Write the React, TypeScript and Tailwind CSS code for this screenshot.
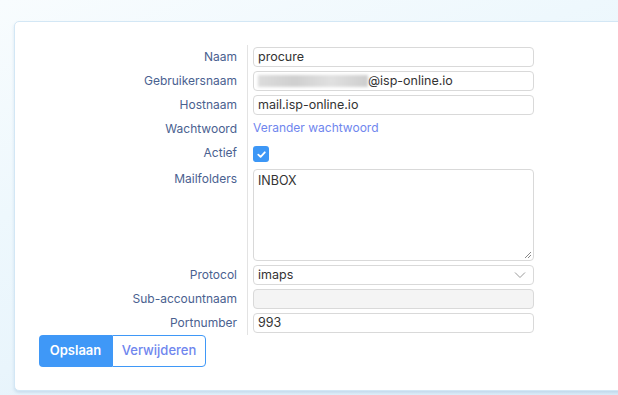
import React from 'react'

const font = { fontFamily: 'Inter, "Noto Sans", sans-serif' }

function Label({ children, className = '' }: { children: React.ReactNode; className?: string }) {
  return (
    <div className={`text-right pr-[10px] text-[12px] leading-[20px] text-[#4a6190] ${className}`}>
      {children}
    </div>
  )
}

const inputBase =
  'w-[281px] h-[20px] rounded-[4px] border border-[#d9d9d9] px-[4px] text-[12.5px] leading-[18px] text-[#333] flex items-center'
const inputCls = `${inputBase} bg-white`

export default function App() {
  return (
    <div
      className="w-[618px] h-[395px] overflow-hidden bg-[linear-gradient(160deg,#f8fcfe_0%,#eef8fd_35%,#e9f5fc_60%,#dbecf8_100%)] pt-[21px] pl-[14px]"
      style={font}
    >
      <div className="w-[640px] h-[370px] rounded-[5px] border border-[#d3e7f5] bg-white shadow-[0_2px_3px_rgba(120,160,200,0.25)] pl-[24px] pt-[23px]">
        <div className="grid grid-cols-[208px_1fr]">
          {/* Naam */}
          <Label className="h-[24px] pt-[2px]">Naam</Label>
          <div className="border-l border-[#e3e3e3] pl-[5px] h-[24px] pt-[2px]">
            <div className={inputCls}>procure</div>
          </div>

          {/* Gebruikersnaam */}
          <Label className="h-[24px] pt-[2px]">Gebruikersnaam</Label>
          <div className="border-l border-[#e3e3e3] pl-[5px] h-[24px] pt-[2px]">
            <div className={inputCls}>
              <span className="inline-block w-[110px] h-[12px] bg-[linear-gradient(90deg,#dcdcdc,#cfcfcf,#e0e0e0,#cdcdcd)] blur-[1.5px]" />
              <span>@isp-online.io</span>
            </div>
          </div>

          {/* Hostnaam */}
          <Label className="h-[24px] pt-[2px]">Hostnaam</Label>
          <div className="border-l border-[#e3e3e3] pl-[5px] h-[24px] pt-[2px]">
            <div className={inputCls}>mail.isp-online.io</div>
          </div>

          {/* Wachtwoord */}
          <Label className="h-[24px] pt-[2px]">Wachtwoord</Label>
          <div className="border-l border-[#e3e3e3] pl-[5px] h-[24px] pt-[1px] text-[12px] leading-[20px] text-[#6f86ee]">
            Verander wachtwoord
          </div>

          {/* Actief */}
          <Label className="h-[26px] pt-[2px]">Actief</Label>
          <div className="border-l border-[#e3e3e3] pl-[5px] h-[26px] pt-[5px]">
            <div className="w-[16px] h-[16px] rounded-[3px] bg-[#3d97f6] flex items-center justify-center">
              <svg width="11" height="11" viewBox="0 0 12 12" fill="none">
                <path d="M2.5 6.2 L5 8.6 L9.6 3.6" stroke="white" strokeWidth="2" strokeLinecap="round" strokeLinejoin="round" />
              </svg>
            </div>
          </div>

          {/* Mailfolders */}
          <Label className="h-[96px] pt-[2px]">Mailfolders</Label>
          <div className="border-l border-[#e3e3e3] pl-[5px] h-[96px] pt-[2px]">
            <div className="relative w-[281px] h-[92px] rounded-[4px] border border-[#d9d9d9] px-[4px] pt-[2px] text-[12.5px] leading-[18px] text-[#333]">
              INBOX
              <svg className="absolute right-[1px] bottom-[1px]" width="9" height="9" viewBox="0 0 9 9">
                <path d="M8 2 L2 8 M8 5 L5 8" stroke="#888" strokeWidth="1" />
              </svg>
            </div>
          </div>

          {/* Protocol */}
          <Label className="h-[24px] pt-[2px]">Protocol</Label>
          <div className="border-l border-[#e3e3e3] pl-[5px] h-[24px] pt-[2px]">
            <div className={`${inputCls} justify-between`}>
              <span>imaps</span>
              <svg width="12" height="8" viewBox="0 0 12 8" className="mr-[3px]">
                <path d="M1 1.5 L6 6.5 L11 1.5" stroke="#9a9a9a" strokeWidth="1" fill="none" />
              </svg>
            </div>
          </div>

          {/* Sub-accountnaam */}
          <Label className="h-[24px] pt-[2px]">Sub-accountnaam</Label>
          <div className="border-l border-[#e3e3e3] pl-[5px] h-[24px] pt-[2px]">
            <div className={`${inputBase} bg-[#f4f4f4]`} />
          </div>

          {/* Portnumber */}
          <Label className="h-[24px] pt-[2px]">Portnumber</Label>
          <div className="border-l border-[#e3e3e3] pl-[5px] h-[24px] pt-[2px]">
            <div className={inputCls}>993</div>
          </div>
        </div>

        <div className="flex">
          <button className="w-[73px] h-[32px] rounded-l-[4px] bg-[#3f98f7] text-white text-[13px] font-semibold">
            Opslaan
          </button>
          <button className="w-[94px] h-[32px] rounded-r-[4px] border border-[#3f98f7] bg-white text-[#6f86ee] text-[13px] font-medium">
            Verwijderen
          </button>
        </div>
      </div>
    </div>
  )
}
